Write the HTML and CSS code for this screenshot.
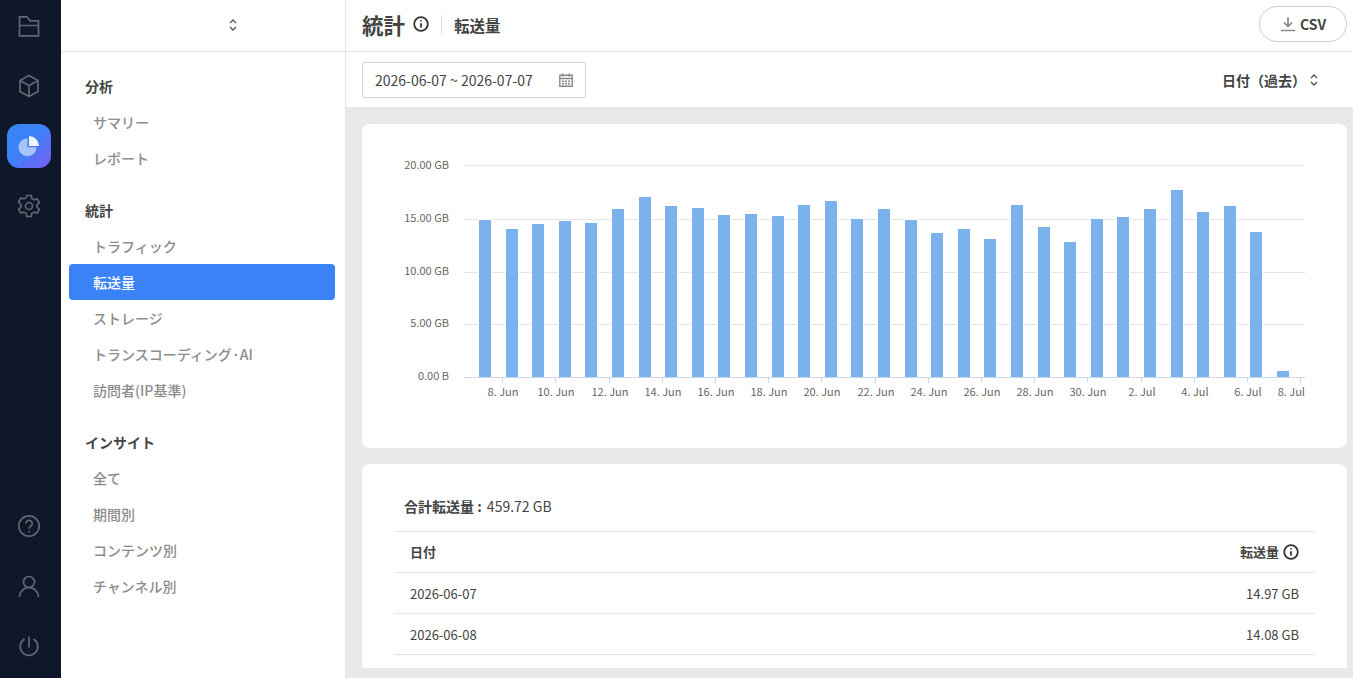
FILE: index.html
```html
<!DOCTYPE html>
<html lang="ja">

<head>
  <meta charset="utf-8">
  <title>統計 - 転送量</title>
  <link rel="stylesheet" href="styles.css">
</head>

<body>
  <nav class="rail">
    <div class="rail-group">
      <a class="rail-item">
        <svg viewBox="0 0 24 24" width="24" height="24"><path d="M2.500 2.800h7.500l3 4h8.500v15h-19z M2.500 11.500h19"/></svg>
      </a>
      <a class="rail-item">
        <svg viewBox="0 0 24 24" width="24" height="24"><path d="M12 1.500l9 5v11l-9 5-9-5v-11z M3 6.500l9 5 9-5 M12 11.500v11"/></svg>
      </a>
      <a class="rail-item active">
        <svg viewBox="0 0 24 24" width="24" height="24" class="pie">
          <path class="pie-back" d="M10.500 4.200a9 9 0 1 0 9 9h-9z"/>
          <path class="pie-front" d="M12 2a10 10 0 0 1 10 10H12z"/>
        </svg>
      </a>
      <a class="rail-item">
        <svg viewBox="0 0 24 24" width="24" height="24"><circle cx="12" cy="12" r="3.500"/><path d="M9.800 1.500h4.400l.7 3.200 2.200 1.200 3.100-1 2.200 3.800-2.400 2.200v2.200l2.400 2.200-2.200 3.800-3.100-1-2.200 1.200-.7 3.200H9.800l-.7-3.200-2.200-1.200-3.100 1-2.200-3.800 2.400-2.200v-2.200L1.600 7.700l2.200-3.800 3.100 1 2.200-1.200z"/></svg>
      </a>
    </div>
    <div class="rail-group">
      <a class="rail-item">
        <svg viewBox="0 0 24 24" width="24" height="24"><circle cx="12" cy="12" r="10.200"/><path d="M8.800 9.500a3.200 3.200 0 1 1 4.800 2.800c-1 .6-1.600 1.200-1.600 2.400"/><path d="M12 16.800v1.700"/></svg>
      </a>
      <a class="rail-item">
        <svg viewBox="0 0 24 24" width="24" height="24"><circle cx="12" cy="8" r="5.500"/><path d="M2.500 23c0-5 4-9.500 9.500-9.500s9.500 4.500 9.500 9.500"/></svg>
      </a>
      <a class="rail-item">
        <svg viewBox="0 0 24 24" width="24" height="24"><path d="M7.500 5a8.800 8.800 0 1 0 9 0 M12 2.500v11"/></svg>
      </a>
    </div>
  </nav>

  <aside class="sidebar">
    <div class="sidebar-top">
      <svg class="updown" viewBox="0 0 8 14" width="8" height="14"><path d="M1 5l3-3 3 3 M1 9l3 3 3-3"/></svg>
    </div>
    <div class="menu">
      <div class="menu-group">
        <div class="menu-title">分析</div>
        <a class="menu-item">サマリー</a>
        <a class="menu-item">レポート</a>
      </div>
      <div class="menu-group">
        <div class="menu-title">統計</div>
        <a class="menu-item">トラフィック</a>
        <a class="menu-item active">転送量</a>
        <a class="menu-item">ストレージ</a>
        <a class="menu-item">トランスコーディング·AI</a>
        <a class="menu-item">訪問者(IP基準)</a>
      </div>
      <div class="menu-group">
        <div class="menu-title">インサイト</div>
        <a class="menu-item">全て</a>
        <a class="menu-item">期間別</a>
        <a class="menu-item">コンテンツ別</a>
        <a class="menu-item">チャンネル別</a>
      </div>
    </div>
  </aside>

  <main class="main">
    <header class="page-head">
      <h1 class="page-title">統計</h1>
      <svg class="info big" viewBox="0 0 16 16" width="16" height="16"><circle cx="8" cy="8" r="6.800"/><path d="M8 7.200v4.300 M8 4.300v1.300"/></svg>
      <span class="head-divider"></span>
      <span class="page-sub">転送量</span>
      <button class="csv-btn">
        <svg viewBox="0 0 16 16" width="16" height="16"><path d="M8 1.500v8.500 M4 6.500l4 4 4-4 M1 14.500h14"/></svg>
        CSV
      </button>
    </header>

    <div class="filter-bar">
      <div class="date-input">
        <span>2026-06-07 ~ 2026-07-07</span>
        <svg viewBox="0 0 14 14" width="14" height="14"><path d="M.8 2.300h12.400v11H.8z M.8 5.500h12.400 M3.800 .5v3 M10.200 .5v3"/><path class="dots" d="M3 7.500h2V9H3z M6 7.500h2V9H6z M9 7.500h2V9H9z M3 10h2v1.500H3z M6 10h2v1.500H6z M9 10h2v1.500H9z"/></svg>
      </div>
      <div class="sort">
        日付（過去）
        <svg class="updown" viewBox="0 0 8 14" width="8" height="14"><path d="M1 5l3-3 3 3 M1 9l3 3 3-3"/></svg>
      </div>
    </div>

    <div class="content">
      <section class="card chart-card">
        <svg class="chart" viewBox="0 0 985 324" width="985" height="324">
          <g class="grid">
            <path d="M102 41.500h841 M102 95.500h841 M102 148.500h841 M102 200.500h841"/>
          </g>
          <g class="y-labels">
            <text x="87" y="45">20.00 GB</text>
            <text x="87" y="98">15.00 GB</text>
            <text x="87" y="151">10.00 GB</text>
            <text x="87" y="203">5.00 GB</text>
            <text x="87" y="256">0.00 B</text>
          </g>
          <g class="bars">
            <rect x="116.500" y="95.500" width="13" height="158"/>
            <rect x="143.500" y="104.500" width="13" height="149"/>
            <rect x="169.500" y="99.500" width="13" height="154"/>
            <rect x="196.500" y="96.500" width="13" height="157"/>
            <rect x="222.500" y="98.500" width="13" height="155"/>
            <rect x="249.500" y="84.500" width="13" height="169"/>
            <rect x="276.500" y="72.500" width="13" height="181"/>
            <rect x="302.500" y="81.500" width="13" height="172"/>
            <rect x="329.500" y="83.500" width="13" height="170"/>
            <rect x="355.500" y="90.500" width="13" height="163"/>
            <rect x="382.500" y="89.500" width="13" height="164"/>
            <rect x="409.500" y="91.500" width="13" height="162"/>
            <rect x="435.500" y="80.500" width="13" height="173"/>
            <rect x="462.500" y="76.500" width="13" height="177"/>
            <rect x="488.500" y="94.500" width="13" height="159"/>
            <rect x="515.500" y="84.500" width="13" height="169"/>
            <rect x="542.500" y="95.500" width="13" height="158"/>
            <rect x="568.500" y="108.500" width="13" height="145"/>
            <rect x="595.500" y="104.500" width="13" height="149"/>
            <rect x="621.500" y="114.500" width="13" height="139"/>
            <rect x="648.500" y="80.500" width="13" height="173"/>
            <rect x="675.500" y="102.500" width="13" height="151"/>
            <rect x="701.500" y="117.500" width="13" height="136"/>
            <rect x="728.500" y="94.500" width="13" height="159"/>
            <rect x="754.500" y="92.500" width="13" height="161"/>
            <rect x="781.500" y="84.500" width="13" height="169"/>
            <rect x="808.500" y="65.500" width="13" height="188"/>
            <rect x="834.500" y="87.500" width="13" height="166"/>
            <rect x="861.500" y="81.500" width="13" height="172"/>
            <rect x="887.500" y="107.500" width="13" height="146"/>
            <rect x="914.500" y="246.500" width="13" height="7"/>
          </g>
          <path class="axis" d="M102 253.500h841 M140.500 254v5 M193.500 254v5 M247.500 254v5 M300.500 254v5 M353.500 254v5 M406.500 254v5 M459.500 254v5 M513.500 254v5 M566.500 254v5 M619.500 254v5 M672.500 254v5 M725.500 254v5 M779.500 254v5 M832.500 254v5 M885.500 254v5 M938.500 254v5"/>
          <g class="x-labels">
            <text x="141" y="272">8. Jun</text>
            <text x="194" y="272">10. Jun</text>
            <text x="248" y="272">12. Jun</text>
            <text x="301" y="272">14. Jun</text>
            <text x="354" y="272">16. Jun</text>
            <text x="407" y="272">18. Jun</text>
            <text x="460" y="272">20. Jun</text>
            <text x="514" y="272">22. Jun</text>
            <text x="567" y="272">24. Jun</text>
            <text x="620" y="272">26. Jun</text>
            <text x="673" y="272">28. Jun</text>
            <text x="726" y="272">30. Jun</text>
            <text x="780" y="272">2. Jul</text>
            <text x="833" y="272">4. Jul</text>
            <text x="886" y="272">6. Jul</text>
            <text x="943" y="272">8. Jul</text>
          </g>
        </svg>
      </section>

      <section class="card table-card">
        <div class="total"><b>合計転送量 :</b> 459.72 GB</div>
        <table class="data-table">
          <thead>
            <tr>
              <th>日付</th>
              <th class="num">
                <span class="th-inner">転送量
                  <svg class="info" viewBox="0 0 16 16" width="16" height="16"><circle cx="8" cy="8" r="6.800"/><path d="M8 7.200v4.300 M8 4.300v1.300"/></svg>
                </span>
              </th>
            </tr>
          </thead>
          <tbody>
            <tr><td>2026-06-07</td><td class="num">14.97 GB</td></tr>
            <tr><td>2026-06-08</td><td class="num">14.08 GB</td></tr>
          </tbody>
        </table>
      </section>
    </div>
  </main>
</body>

</html>
```

FILE: styles.css
```css
* {
  box-sizing: border-box;
  margin: 0;
  padding: 0;
}

html,
body {
  height: 100%;
}

body {
  display: flex;
  overflow: hidden;
  font-family: "Noto Sans CJK JP", "Noto Sans", sans-serif;
  font-size: 14px;
  color: #444;
  background-color: #fff;
}

/* Icon rail */
.rail {
  width: 61px;
  flex-shrink: 0;
  background-color: #0f172a;
  display: flex;
  flex-direction: column;
  justify-content: space-between;
  padding: 4px 0 10px 7px;
}

.rail-group {
  display: flex;
  flex-direction: column;
  gap: 16px;
}

.rail-item {
  width: 44px;
  height: 44px;
  border-radius: 12px;
  display: flex;
  align-items: center;
  justify-content: center;
}

.rail-item svg {
  fill: none;
  stroke: #63676f;
  stroke-width: 1.700;
}

.rail-item.active {
  background: linear-gradient(135deg, #3b82f6 45%, #7c5cf6 100%);
}

.rail-item .pie {
  stroke: none;
}

.pie-back {
  fill: #a9c4f8;
}

.pie-front {
  fill: #eef4fe;
}

/* Side menu */
.sidebar {
  width: 285px;
  flex-shrink: 0;
  border-right: 1px solid #e5e5e5;
}

.sidebar-top {
  height: 52px;
  border-bottom: 1px solid #e5e5e5;
  display: flex;
  align-items: center;
  justify-content: center;
  padding: 0 0 2px 60px;
}

.updown {
  fill: none;
  stroke: #555;
  stroke-width: 1.400;
}

.menu {
  padding: 16px 10px 0 8px;
  display: flex;
  flex-direction: column;
  gap: 16px;
}

.menu-title {
  height: 36px;
  line-height: 36px;
  padding-left: 16px;
  font-weight: 700;
  color: #444;
}

.menu-item {
  display: block;
  height: 36px;
  line-height: 36px;
  padding-left: 24px;
  border-radius: 4px;
  font-weight: 500;
  color: #8c8c8c;
}

.menu-item.active {
  background-color: #3b82f6;
  color: #fff;
}

/* Main */
.main {
  flex: 1;
  min-width: 0;
  display: flex;
  flex-direction: column;
  background-color: #e9e9e9;
}

.page-head {
  height: 52px;
  flex-shrink: 0;
  background-color: #fff;
  border-bottom: 1px solid #e5e5e5;
  display: flex;
  align-items: center;
  padding: 0 6px 2px 16px;
}

.page-title {
  font-size: 21.500px;
  font-weight: 700;
  line-height: 1;
  color: #444;
}

.info {
  fill: none;
  stroke: #333;
  stroke-width: 1.800;
}

.info.big {
  margin: -2px 0 0 8px;
}

.head-divider {
  width: 1px;
  height: 20px;
  background-color: #ddd;
  margin: 0 12px;
}

.page-sub {
  font-size: 15.500px;
  font-weight: 700;
  color: #444;
}

.csv-btn {
  margin-left: auto;
  margin-top: -2px;
  width: 88px;
  height: 36px;
  border: 1px solid #ccc;
  border-radius: 18px;
  background-color: #fff;
  font-family: inherit;
  font-size: 14px;
  font-weight: 700;
  color: #444;
  display: flex;
  align-items: center;
  justify-content: center;
  gap: 4px;
}

.csv-btn svg {
  fill: none;
  stroke: #888;
  stroke-width: 1.700;
}

.filter-bar {
  height: 55px;
  flex-shrink: 0;
  background-color: #fff;
  display: flex;
  align-items: center;
  justify-content: space-between;
  padding: 0 35px 0 16px;
}

.date-input {
  width: 224px;
  height: 36px;
  border: 1px solid #d4d4d4;
  border-radius: 2px;
  display: flex;
  align-items: center;
  justify-content: space-between;
  padding: 0 12px 0 12px;
  color: #444;
}

.date-input svg {
  fill: none;
  stroke: #888;
  stroke-width: 1.400;
}

.date-input .dots {
  fill: #888;
  stroke: none;
}

.sort {
  display: flex;
  align-items: center;
  gap: 4px;
  font-weight: 700;
  color: #444;
}

.content {
  flex: 1;
  min-height: 0;
  margin-bottom: 10px;
  padding: 17px 6px 0 16px;
  overflow: hidden;
  display: flex;
  flex-direction: column;
  gap: 16px;
}

.card {
  background-color: #fff;
  border-radius: 8px;
  flex-shrink: 0;
}

.chart-card {
  height: 324px;
}

.chart {
  display: block;
}

.grid path {
  fill: none;
  stroke: #e6e6e6;
}

.bars rect {
  fill: #7cb2ec;
  stroke: #fff;
}

.axis {
  fill: none;
  stroke: #ccd6eb;
}

.y-labels text,
.x-labels text {
  font-size: 11px;
  fill: #666;
}

.y-labels text {
  text-anchor: end;
}

.x-labels text {
  text-anchor: middle;
}

.x-labels text:last-child {
  text-anchor: end;
}

.table-card {
  padding: 32px;
}

.total {
  height: 35px;
  padding-left: 10px;
  line-height: 20px;
  color: #444;
}

.total b {
  margin-right: 2px;
}

.data-table {
  width: 100%;
  border-collapse: collapse;
  border-top: 1px solid #e5e5e5;
}

.data-table th,
.data-table td {
  height: 41px;
  padding: 0 16px;
  text-align: left;
  border-bottom: 1px solid #e5e5e5;
  color: #444;
}

.data-table th {
  padding-bottom: 1px;
  font-size: 13px;
  font-weight: 700;
}

.data-table td {
  padding-top: 1px;
  font-size: 13px;
}

.data-table .num {
  text-align: right;
}

.th-inner {
  display: inline-flex;
  align-items: center;
  gap: 4px;
}
```
